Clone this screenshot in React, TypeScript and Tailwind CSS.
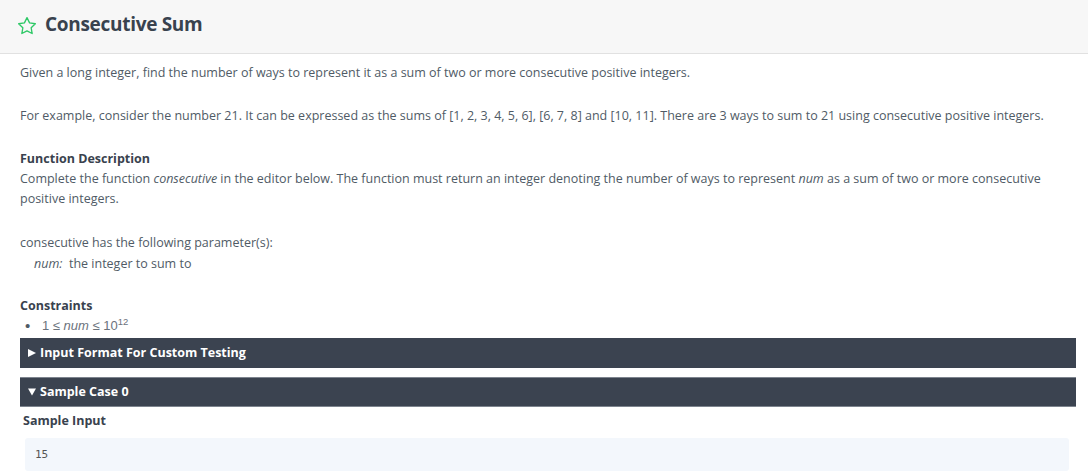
import { FiStar } from "react-icons/fi";

const font = { fontFamily: '"Open Sans", "Noto Sans", sans-serif' };

function Caret({ open }: { open: boolean }) {
   return (
      <svg width="13" height="10" viewBox="0 0 13 10" className="shrink-0">
         {open ? <polygon points="1,1.5 9,1.5 5,8.5" fill="white" /> : <polygon points="1,1 9,5 1,9" fill="white" />}
      </svg>
   );
}

function Bar({ open, label, border }: { open: boolean; label: string; border?: boolean }) {
   return (
      <div
         className={
            "h-[30px] bg-[#3b4350] flex items-center pl-[7px] text-white text-[12.5px] font-bold " +
            (border ? "border-y border-[#7d848e]" : "")
         }
      >
         <Caret open={open} />
         <span>{label}</span>
      </div>
   );
}

export default function App() {
   return (
      <div className="w-[1088px] h-[475px] bg-white overflow-hidden text-[#505b66]" style={font}>
         {/* Header */}
         <header className="h-[54px] bg-[#f7f7f7] border-b border-[#e1e1e1] flex items-center pl-[17px] pb-[4px] gap-[8px]">
            <FiStar className="text-[#2ec866] mt-[3px]" size={20} strokeWidth={1.6} />
            <h1 className="text-[19px] font-bold text-[#39424e] tracking-[-0.3px]">Consecutive Sum</h1>
         </header>

         {/* Body */}
         <div className="pl-[20px] pr-[12px] text-[12.5px] leading-[20px]">
            <p className="mt-[9px]">
               Given a long integer, find the number of ways to represent it as a sum of two or more consecutive positive integers.
            </p>
            <p className="mt-[23px]">
               For example, consider the number 21. It can be expressed as the sums of [1, 2, 3, 4, 5, 6], [6, 7, 8] and [10, 11]. There are 3 ways to sum to 21 using consecutive positive integers.
            </p>

            <h3 className="mt-[23px] font-bold text-[#39424e]">Function Description</h3>
            <p>
               Complete the function <i>consecutive</i> in the editor below. The function must return an integer denoting the number of ways to represent <i>num</i> as a sum of two or more consecutive
               <br />
               positive integers.
            </p>

            <p className="mt-[24px]">consecutive has the following parameter(s):</p>
            <p className="pl-[14px] mt-[1px]">
               <i>num:</i>&nbsp; the integer to sum to
            </p>

            <h3 className="mt-[22px] font-bold text-[#39424e]">Constraints</h3>
            <div className="flex items-center pl-[5px] text-[13px] text-[#6b737c]" style={{ fontFamily: '"Liberation Sans", Arial, sans-serif' }}>
               <span className="w-[17px] text-[15px] text-[#505b66]">•</span>
               <span>
                  1 ≤ <i>num</i> ≤ 10<sup className="text-[9.5px]">12</sup>
               </span>
            </div>

            <div className="mt-[2px] flex flex-col gap-[9px]">
               <Bar open={false} label="Input Format For Custom Testing" />
               <Bar open={true} label="Sample Case 0" border />
            </div>

            <h3 className="mt-[4px] pl-[3px] font-bold text-[#39424e] text-[12.5px]">Sample Input</h3>
            <div className="mt-[7px] ml-[5px] mr-[7px] h-[33px] bg-[#f3f7fc] rounded-[3px] flex items-center pl-[10px]">
               <span className="text-[11px] text-[#555]" style={{ fontFamily: '"DejaVu Sans Mono", monospace' }}>15</span>
            </div>
         </div>
      </div>
   );
}
